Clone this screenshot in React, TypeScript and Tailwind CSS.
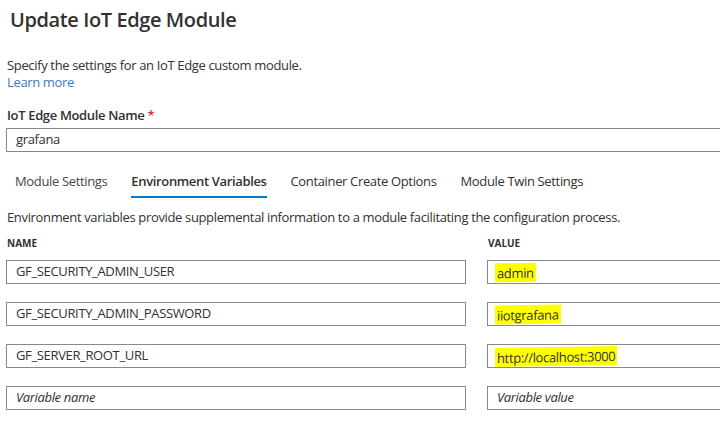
const font = "font-['Open_Sans','Noto_Sans',sans-serif]";

const rows = [
  { name: "GF_SECURITY_ADMIN_USER", value: "admin" },
  { name: "GF_SECURITY_ADMIN_PASSWORD", value: "iiotgrafana" },
  { name: "GF_SERVER_ROOT_URL", value: "http://localhost:3000" },
];

function Field({ children, className = "" }: { children: React.ReactNode; className?: string }) {
  return (
    <div className={`flex h-[24px] items-center border border-[#8a8886] bg-white pl-[9px] text-[13px] tracking-[-0.35px] text-[#323130] ${className}`}>
      {children}
    </div>
  );
}

export default function App() {
  return (
    <div className={`h-[424px] w-[720px] overflow-hidden bg-white ${font} text-[#323130] tracking-[-0.35px]`}>
      <h1 className="pl-[10px] pt-[6px] text-[20px] font-semibold leading-[28px] tracking-[-0.4px]">Update IoT Edge Module</h1>

      <p className="mt-[23px] pl-[7px] text-[13px] leading-[17px]">
        Specify the settings for an IoT Edge custom module.
      </p>
      <a className="block pl-[7px] text-[13px] leading-[17px] text-[#3b7ac0]">Learn more</a>

      <div className="mt-[15px] pl-[7px] text-[13px] font-semibold leading-[18px]">
        IoT Edge Module Name <span className="text-[#d13438]">*</span>
      </div>
      <div className="-mr-[10px] ml-[6px] mt-[4px]">
        <Field>grafana</Field>
      </div>

      <div className="mt-[20px] flex pl-[15px] text-[13px]">
        <div className="pr-[24px] leading-[18px] text-[#484644]">Module Settings</div>
        <div className="pr-[24px]">
          <div className="font-semibold leading-[18px]">Environment Variables</div>
          <div className="mt-[6px] h-[2px] bg-[#0078d4]" />
        </div>
        <div className="pr-[24px] leading-[18px]">Container Create Options</div>
        <div className="leading-[18px]">Module Twin Settings</div>
      </div>

      <p className="mt-[11px] pl-[7px] text-[13px] leading-[17px]">
        Environment variables provide supplemental information to a module facilitating the configuration process.
      </p>

      <div className="-mr-[40px] ml-[6px] mt-[10px] grid grid-cols-[460px_1fr] gap-x-[21px]">
        <div className="pb-[10px] pl-[1px] text-[10px] font-bold leading-[14px] tracking-normal">NAME</div>
        <div className="pb-[10px] pl-[1px] text-[10px] font-bold leading-[14px] tracking-normal">VALUE</div>
        {rows.map((r) => (
          <>
            <Field key={r.name + "n"} className="mb-[18px]">{r.name}</Field>
            <Field key={r.name + "v"} className="mb-[18px]">
              <span className="-ml-[2px] -skew-y-1 bg-[#ffff00] px-[2px] pt-[1px] leading-[18px]">{r.value}</span>
            </Field>
          </>
        ))}
        <Field className="italic text-[#8a8886]">Variable name</Field>
        <Field className="italic text-[#8a8886]">Variable value</Field>
      </div>
    </div>
  );
}
